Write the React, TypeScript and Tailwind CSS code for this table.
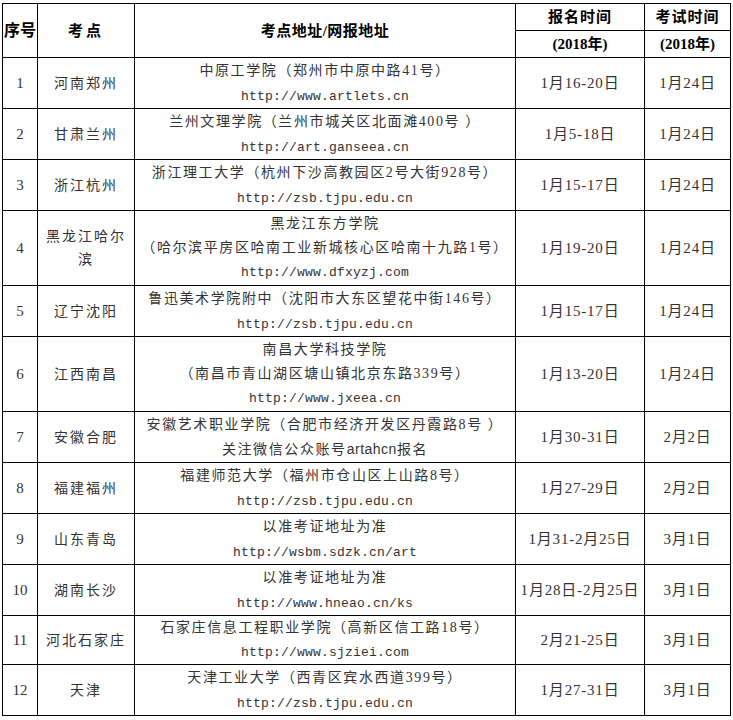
import React from "react";

type Row = {
  n: string;
  city: React.ReactNode[];
  addr: React.ReactNode[];
  reg: string;
  exam: string;
  h: string;
  lh: string;
};

const serif = "font-['Liberation_Serif','Noto_Sans_CJK_SC',serif]";
const mono = "font-['Liberation_Mono',monospace] tracking-[0.2px] text-[13px]";

const U = ({ children }: { children: React.ReactNode }) => <span className={mono}>{children}</span>;

const L25 = "h-[25px] leading-[25px]";
const L24 = "h-[24px] leading-[24px]";

const rows: Row[] = [
  { n: "1", city: ["河南郑州"], addr: ["中原工学院（郑州市中原中路41号）", <U>http://www.artlets.cn</U>], reg: "1月16-20日", exam: "1月24日", h: "h-[51px]", lh: L25 },
  { n: "2", city: ["甘肃兰州"], addr: ["兰州文理学院（兰州市城关区北面滩400号 ）", <U>http://art.ganseea.cn</U>], reg: "1月5-18日", exam: "1月24日", h: "h-[51px]", lh: L25 },
  { n: "3", city: ["浙江杭州"], addr: ["浙江理工大学（杭州下沙高教园区2号大街928号）", <U>http://zsb.tjpu.edu.cn</U>], reg: "1月15-17日", exam: "1月24日", h: "h-[51px]", lh: L25 },
  { n: "4", city: ["黑龙江哈尔", "滨"], addr: ["黑龙江东方学院", "（哈尔滨平房区哈南工业新城核心区哈南十九路1号）", <U>http://www.dfxyzj.com</U>], reg: "1月19-20日", exam: "1月24日", h: "h-[75px]", lh: L24 },
  { n: "5", city: ["辽宁沈阳"], addr: ["鲁迅美术学院附中（沈阳市大东区望花中街146号）", <U>http://zsb.tjpu.edu.cn</U>], reg: "1月15-17日", exam: "1月24日", h: "h-[51px]", lh: L25 },
  { n: "6", city: ["江西南昌"], addr: ["南昌大学科技学院", "（南昌市青山湖区塘山镇北京东路339号）", <U>http://www.jxeea.cn</U>], reg: "1月13-20日", exam: "1月24日", h: "h-[75px]", lh: L24 },
  { n: "7", city: ["安徽合肥"], addr: ["安徽艺术职业学院（合肥市经济开发区丹霞路8号 ）", <>关注微信公众账号<span className="font-['Liberation_Sans',sans-serif] tracking-[0.5px]">artahcn</span>报名</>], reg: "1月30-31日", exam: "2月2日", h: "h-[51px]", lh: L25 },
  { n: "8", city: ["福建福州"], addr: ["福建师范大学（福州市仓山区上山路8号）", <U>http://zsb.tjpu.edu.cn</U>], reg: "1月27-29日", exam: "2月2日", h: "h-[51px]", lh: L25 },
  { n: "9", city: ["山东青岛"], addr: ["以准考证地址为准", <U>http://wsbm.sdzk.cn/art</U>], reg: "1月31-2月25日", exam: "3月1日", h: "h-[51px]", lh: L25 },
  { n: "10", city: ["湖南长沙"], addr: ["以准考证地址为准", <U>http://www.hneao.cn/ks</U>], reg: "1月28日-2月25日", exam: "3月1日", h: "h-[51px]", lh: L25 },
  { n: "11", city: ["河北石家庄"], addr: ["石家庄信息工程职业学院（高新区信工路18号）", <U>http://www.sjziei.com</U>], reg: "2月21-25日", exam: "3月1日", h: "h-[49px]", lh: L24 },
  { n: "12", city: ["天津"], addr: ["天津工业大学（西青区宾水西道399号）", <U>http://zsb.tjpu.edu.cn</U>], reg: "1月27-31日", exam: "3月1日", h: "h-[51px]", lh: L25 },
];

const L = ({ children, cls = L25 }: { children: React.ReactNode; cls?: string }) => (
  <div className={`${cls} whitespace-nowrap overflow-visible`}>{children}</div>
);

export default function App() {
  const td = "border border-black text-center align-middle p-0";
  const th = "border border-black text-center align-middle p-0 font-bold text-black text-[15px]";
  return (
    <div className="w-[733px] h-[720px] bg-white pl-[2px] pt-[3px]">
      <table className={`table-fixed border-collapse w-[728px] ${serif} text-[#333] text-[14px] leading-[24px]`}>
        <colgroup>
          <col className="w-[35px]" />
          <col className="w-[97px]" />
          <col className="w-[381px]" />
          <col className="w-[129px]" />
          <col className="w-[86px]" />
        </colgroup>
        <thead>
          <tr className="h-[27px]">
            <th rowSpan={2} className={`${th} text-[16px]`}><L cls={L24}>序号</L></th>
            <th rowSpan={2} className={`${th} tracking-[3px]`}><L cls={L24}>考点</L></th>
            <th rowSpan={2} className={`${th} tracking-[0.5px]`}><L cls={L24}>考点地址/网报地址</L></th>
            <th className={`${th} tracking-[1px]`}><L cls={L24}>报名时间</L></th>
            <th className={`${th} tracking-[1px]`}><L cls={L24}>考试时间</L></th>
          </tr>
          <tr className="h-[27px]">
            <th className={th}><L cls={L24}>(2018年)</L></th>
            <th className={th}><L cls={L24}>(2018年)</L></th>
          </tr>
        </thead>
        <tbody>
          {rows.map((r) => (
            <tr key={r.n} className={r.h}>
              <td className={`${td} text-[15px]`}><L cls={L24}>{r.n}</L></td>
              <td className={`${td} tracking-[2px]`}>
                {r.city.map((c, i) => (
                  <div key={i} className="h-[23px] leading-[23px] whitespace-nowrap">{c}</div>
                ))}
              </td>
              <td className={`${td} tracking-[1.6px]`}>
                {r.addr.map((a, i) => (
                  <L key={i} cls={r.lh}>{a}</L>
                ))}
              </td>
              <td className={`${td} text-[15px] tracking-[0.8px]`}><L cls={L24}>{r.reg}</L></td>
              <td className={`${td} text-[15px] tracking-[0.8px]`}><L cls={L24}>{r.exam}</L></td>
            </tr>
          ))}
        </tbody>
      </table>
    </div>
  );
}
